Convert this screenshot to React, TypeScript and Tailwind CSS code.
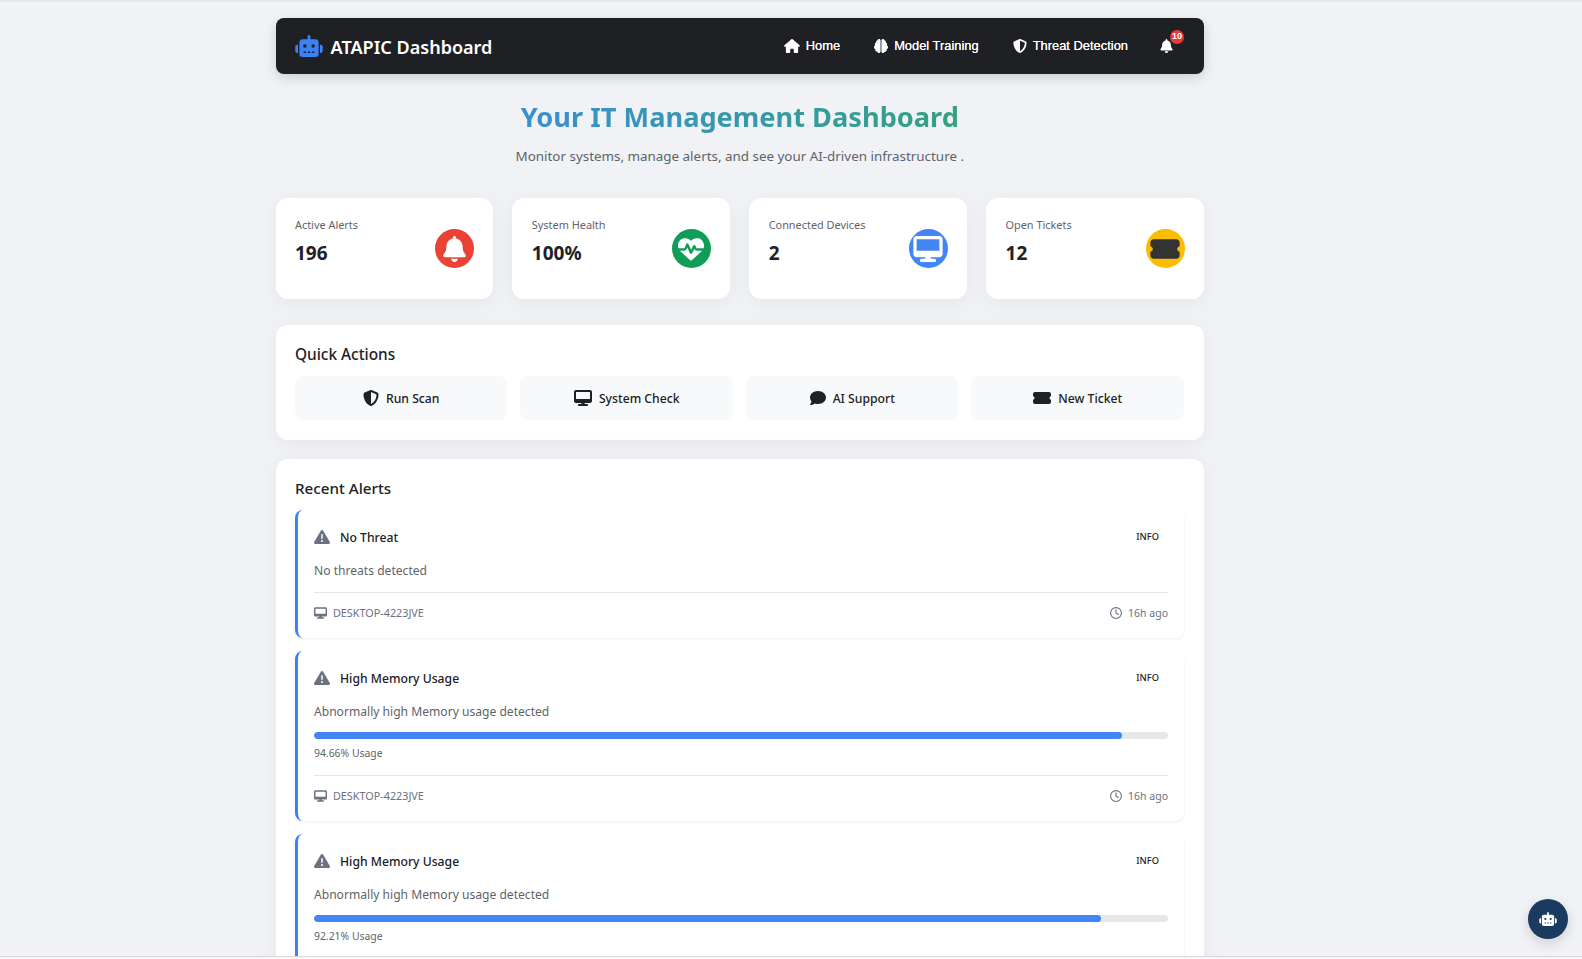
import { FaRobot, FaHouse, FaBrain, FaShieldHalved, FaBell, FaHeartPulse, FaDesktop, FaTicketSimple, FaComment, FaTriangleExclamation, FaRegClock } from "react-icons/fa6";
import type { ReactNode } from "react";

function Stat({ label, value, bg, icon }: { label: string; value: string; bg: string; icon: ReactNode }) {
  return (
    <div className="flex h-[101px] items-center justify-between rounded-xl bg-white pl-[19.4px] pr-[19.4px] shadow-[0_4px_20px_rgba(0,0,0,0.05)]">
      <div className="flex h-full flex-col pt-[18px]">
        <span className="text-[10.9px] leading-[17px] text-[#5f6368]">{label}</span>
        <span className="mt-[7px] text-[19px] font-bold leading-[26px] text-[#202124]">{value}</span>
      </div>
      <div className={`flex h-[39px] w-[39px] items-center justify-center rounded-full ${bg}`}>{icon}</div>
    </div>
  );
}

function Action({ icon, label }: { icon: ReactNode; label: string }) {
  return (
    <button className="flex h-[44px] items-center justify-center gap-[7px] rounded-lg bg-[#f8f9fa] pt-[2px] text-[12.2px] font-medium text-[#202124] [&>svg]:-mt-[3px]">
      {icon}
      <span>{label}</span>
    </button>
  );
}

function Alert({ title, message, usage, time }: { title: string; message: string; usage?: number; time: string }) {
  return (
    <div className="rounded-lg border-l-[3px] border-[#3b82f6] bg-white pb-[18px] pl-[16px] pr-[16px] pt-[16px] shadow-[0_1px_3px_rgba(0,0,0,0.08)]">
      <div className="flex h-[24px] items-center justify-between">
        <div className="flex items-center gap-[10px]">
          <FaTriangleExclamation className="-mt-[1px] h-[16px] w-[16px] text-[#6b7280]" />
          <span className="text-[12.2px] font-medium text-[#202124]">{title}</span>
        </div>
        <span className="mb-[2px] pr-[9px] text-[9.3px] font-medium text-[#202124]">INFO</span>
      </div>
      <p className="mt-[12px] text-[12.1px] leading-[18px] text-[#5f6368]">{message}</p>
      {usage !== undefined && (
        <div className="mb-[15px] mt-[11px]">
          <div className="h-[7px] overflow-hidden rounded-full bg-[#e5e7eb]">
            <div className="h-full rounded-full bg-[#4285f4]" style={{ width: `${usage}%` }} />
          </div>
          <div className="mt-[7px] text-[10.4px] leading-[14px] text-[#5f6368]">{usage}% Usage</div>
        </div>
      )}
      <div className="mt-[12px] flex items-center justify-between border-t border-[#e5e7eb] pt-[13px] text-[10.5px] leading-[14px] text-[#6b7280]">
        <div className="flex items-center gap-[6px]">
          <FaDesktop className="h-[12px] w-[13px]" />
          <span className="text-[10.8px]">DESKTOP-4223JVE</span>
        </div>
        <div className="flex items-center gap-[6px]">
          <FaRegClock className="h-[12px] w-[12px]" />
          <span>{time}</span>
        </div>
      </div>
    </div>
  );
}

export default function App() {
  return (
    <div className="relative h-[959px] overflow-hidden border-t-2 border-[#e8e8e8] bg-[#f0f2f6] font-['Noto_Sans','Open_Sans',sans-serif]">
      <div className="ml-[275.6px] w-[928.4px] pt-[16px]">
        <nav className="flex h-[56px] items-center justify-between rounded-lg bg-[#1f2024] pl-[19px] pr-[19px] shadow-[0_4px_12px_rgba(0,0,0,0.15)]">
          <div className="flex items-center gap-[8px]">
            <FaRobot className="h-[22px] w-[28px] text-[#3b82f6]" />
            <span className="mt-[3px] text-[18.05px] font-semibold text-white">ATAPIC Dashboard</span>
          </div>
          <div className="flex items-center gap-[34px] font-['Liberation_Sans',sans-serif] text-[12.9px] font-medium text-white [text-shadow:0_0_0.5px_white]">
            <div className="flex items-center gap-[6px]"><FaHouse className="h-[14px] w-[16px]" /><span>Home</span></div>
            <div className="flex items-center gap-[6px]"><FaBrain className="h-[14px] w-[14px]" /><span>Model Training</span></div>
            <div className="flex items-center gap-[6px]"><FaShieldHalved className="h-[14px] w-[14px]" /><span>Threat Detection</span></div>
            <div className="relative -ml-[2px] mr-[12px]">
              <FaBell className="h-[14px] w-[13px]" />
              <span className="absolute -right-[11px] -top-[9px] flex h-[14px] w-[14px] items-center justify-center rounded-full bg-[#ea3a36] text-[9px] font-bold [text-shadow:none]">10</span>
            </div>
          </div>
        </nav>

        <header className="relative mt-[24px] flex h-[78px] flex-col items-center">
          <div className="absolute inset-x-0 top-0 h-[60px] bg-[radial-gradient(circle,rgba(0,0,0,0.013)_2px,transparent_3px)] bg-[length:24px_24px] bg-[position:-8px_-8px]" />
          <h1 className="relative bg-gradient-to-r from-[#3b8fd0] to-[#36a07f] bg-clip-text text-[27.2px] font-bold leading-[38px] text-transparent">Your IT Management Dashboard</h1>
          <p className="relative mt-[11px] text-[13.4px] leading-[19px] text-[#5f6368]">Monitor systems, manage alerts, and see your AI-driven infrastructure .</p>
        </header>

        <section className="mt-[22px] grid grid-cols-4 gap-[19px]">
          <Stat label="Active Alerts" value="196" bg="bg-[#ea4335]" icon={<FaBell className="h-[26px] w-[23px] text-white" />} />
          <Stat label="System Health" value="100%" bg="bg-[#0f9d58]" icon={<FaHeartPulse className="h-[26px] w-[26px] text-white" />} />
          <Stat label="Connected Devices" value="2" bg="bg-[#4285f4]" icon={<FaDesktop className="h-[26px] w-[30px] text-white" />} />
          <Stat label="Open Tickets" value="12" bg="bg-[#fbbc04]" icon={<FaTicketSimple className="h-[26px] w-[30px] text-[#333333]" />} />
        </section>

        <section className="mt-[26px] h-[115px] rounded-xl bg-white pl-[19.4px] pr-[20px] pt-[19px] shadow-[0_4px_20px_rgba(0,0,0,0.05)]">
          <h2 className="text-[15.4px] font-medium leading-[22px] text-[#202124]">Quick Actions</h2>
          <div className="mt-[10px] grid grid-cols-4 gap-[13px]">
            <Action icon={<FaShieldHalved className="h-[16px] w-[16px]" />} label="Run Scan" />
            <Action icon={<FaDesktop className="h-[16px] w-[18px]" />} label="System Check" />
            <Action icon={<FaComment className="h-[16px] w-[16px]" />} label="AI Support" />
            <Action icon={<FaTicketSimple className="h-[16px] w-[18px]" />} label="New Ticket" />
          </div>
        </section>

        <section className="mt-[19px] rounded-xl bg-white pl-[19.4px] pr-[20px] pt-[18px] shadow-[0_4px_20px_rgba(0,0,0,0.05)]">
          <h2 className="text-[15.2px] font-medium leading-[22px] text-[#202124]">Recent Alerts</h2>
          <div className="mt-[11px] flex flex-col gap-[13px] pb-[20px]">
            <Alert title="No Threat" message="No threats detected" time="16h ago" />
            <Alert title="High Memory Usage" message="Abnormally high Memory usage detected" usage={94.66} time="16h ago" />
            <Alert title="High Memory Usage" message="Abnormally high Memory usage detected" usage={92.21} time="16h ago" />
          </div>
        </section>
      </div>

      <button className="absolute bottom-[20px] right-[14px] flex h-[40px] w-[40px] items-center justify-center rounded-full bg-[#1a3a5f] shadow-[0_4px_12px_rgba(0,0,0,0.15)]">
        <FaRobot className="h-[14px] w-[18px] text-white" />
      </button>
      <div className="absolute bottom-0 left-0 h-[3px] w-full border-t border-[#d8d8d8] bg-[#f8f8f8]" />
    </div>
  );
}
